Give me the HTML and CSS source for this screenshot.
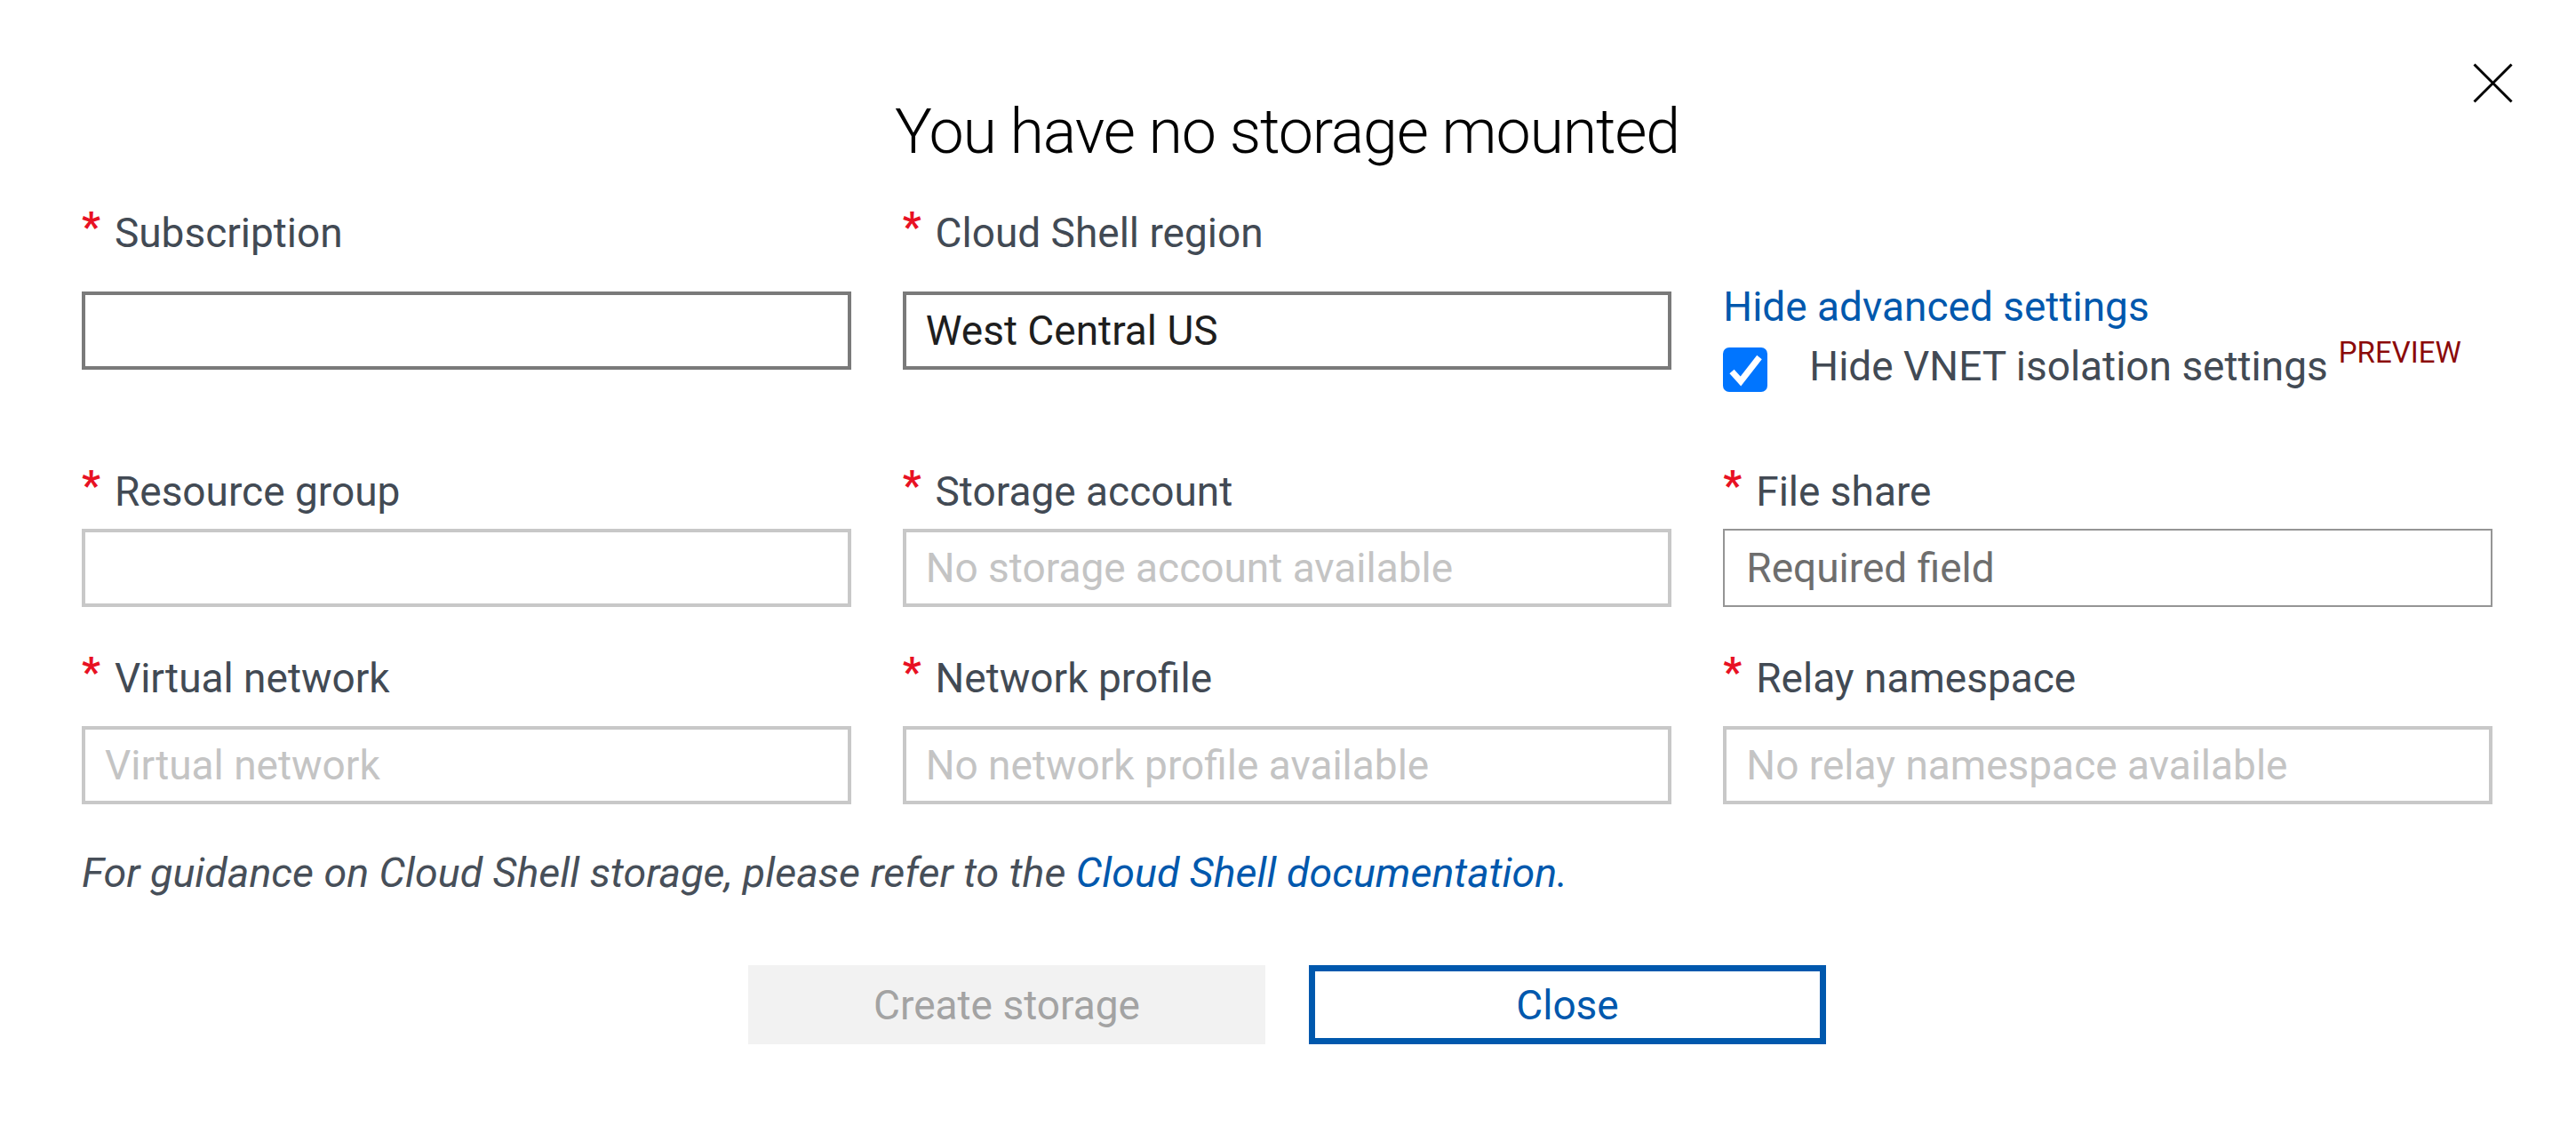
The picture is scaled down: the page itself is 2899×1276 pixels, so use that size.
FILE: index.html
```
<!DOCTYPE html>
<html lang="en">
<head>
    <meta charset="UTF-8">
    <meta name="viewport" content="width=device-width, initial-scale=1.0">
    <title>Cloud Shell storage</title>
    <link rel="stylesheet" href="styles.css">
</head>
<body>
    <div class="dialog">
        <button class="close-x" aria-label="Close">
            <svg viewBox="0 0 45 45" width="45" height="45">
                <path d="M1.5 1.5 L43.5 43.5 M43.5 1.5 L1.5 43.5" stroke="#000" stroke-width="3" fill="none"/>
            </svg>
        </button>

        <h1 class="title">You have no storage mounted</h1>

        <div class="row row-top">
            <div class="field">
                <label class="label"><span class="req">*</span>Subscription</label>
                <input class="input active" type="text" value="">
            </div>
            <div class="field">
                <label class="label"><span class="req">*</span>Cloud Shell region</label>
                <input class="input active" type="text" value="West Central US">
            </div>
            <div class="advanced">
                <a class="link" href="#">Hide advanced settings</a>
                <div class="check-row">
                    <span class="checkbox">
                        <svg viewBox="0 0 50 50" width="50" height="50">
                            <path d="M10 27 L20 38 L41 11" stroke="#fff" stroke-width="7" fill="none" stroke-linejoin="miter"/>
                        </svg>
                    </span>
                    <span class="check-label">Hide VNET isolation settings<span class="preview">PREVIEW</span></span>
                </div>
            </div>
        </div>

        <div class="row row-mid">
            <div class="field">
                <label class="label"><span class="req">*</span>Resource group</label>
                <input class="input" type="text" disabled>
            </div>
            <div class="field">
                <label class="label"><span class="req">*</span>Storage account</label>
                <input class="input" type="text" placeholder="No storage account available" disabled>
            </div>
            <div class="field">
                <label class="label"><span class="req">*</span>File share</label>
                <input class="input plain" type="text" placeholder="Required field">
            </div>
        </div>

        <div class="row row-bottom">
            <div class="field">
                <label class="label"><span class="req">*</span>Virtual network</label>
                <input class="input" type="text" placeholder="Virtual network" disabled>
            </div>
            <div class="field">
                <label class="label"><span class="req">*</span>Network profile</label>
                <input class="input" type="text" placeholder="No network profile available" disabled>
            </div>
            <div class="field">
                <label class="label"><span class="req">*</span>Relay namespace</label>
                <input class="input" type="text" placeholder="No relay namespace available" disabled>
            </div>
        </div>

        <p class="note">For guidance on Cloud Shell storage, please refer to the <a href="#">Cloud Shell documentation.</a></p>

        <div class="actions">
            <button class="btn btn-disabled" disabled>Create storage</button>
            <button class="btn btn-outline">Close</button>
        </div>
    </div>
</body>
</html>
```
FILE: styles.css
```
/* Global */
body {
    margin: 0;
    font-family: "Segoe UI", Roboto, "Noto Sans", sans-serif;
    background: #FFFFFF;
    color: #424a54;
}

a {
    text-decoration: none;
    color: #0058ad;
}

button {
    font-family: inherit;
    cursor: pointer;
}

.dialog {
    position: relative;
    padding: 106px 94px 0 92px;
}

/* Header */
.close-x {
    position: absolute;
    top: 71px;
    right: 71px;
    width: 45px;
    height: 45px;
    padding: 0;
    border: none;
    background: none;
}

.close-x svg {
    display: block;
}

.title {
    margin: 0;
    font-size: 70px;
    line-height: 84px;
    font-weight: 300;
    letter-spacing: -1.2px;
    color: #000;
    text-align: center;
}

/* Form rows */
.row {
    display: grid;
    grid-template-columns: repeat(3, 1fr);
    column-gap: 58px;
    align-items: start;
}

.row-top {
    margin-top: 42px;
}

.row-mid {
    margin-top: 81px;
}

.row-bottom {
    margin-top: 50px;
}

.field {
    display: flex;
    flex-direction: column;
}

.label {
    font-size: 46px;
    line-height: 60px;
    color: #424a54;
}

.req {
    color: #e81123;
    font-weight: 700;
    line-height: 0;
    vertical-align: 7px;
    margin-right: 16px;
}

.input {
    box-sizing: border-box;
    width: 100%;
    height: 88px;
    padding: 0 22px;
    font-family: inherit;
    font-size: 46px;
    color: #1e1e1e;
    background: #FFFFFF;
    border: 4px solid #c8c8c8;
    border-radius: 0;
    outline: none;
}

.input::placeholder {
    color: #c4c4c4;
}

.input.active {
    border-color: #7a7a7a;
}

.input.plain {
    border: 2px solid #959595;
    padding-left: 24px;
}

.input.plain::placeholder {
    color: #6e6e6e;
}

.row-top .input {
    margin-top: 36px;
}

.row-mid .input {
    margin-top: 12px;
}

.row-bottom .input {
    margin-top: 24px;
}

/* Advanced settings */
.advanced {
    padding-top: 83px;
    font-size: 46px;
    line-height: 60px;
}

.link {
    display: block;
}

.check-row {
    display: flex;
    align-items: flex-start;
    margin-top: 7px;
}

.checkbox {
    width: 50px;
    height: 50px;
    margin-top: 9px;
    margin-right: 47px;
    border-radius: 7px;
    background: #0075ff;
    flex-shrink: 0;
}

.checkbox svg {
    display: block;
}

.check-label {
    color: #424a54;
}

.preview {
    font-size: 33px;
    line-height: 0;
    vertical-align: 20px;
    margin-left: 12px;
    color: #8b0a0a;
}

/* Footer */
.note {
    margin: 47px 0 0;
    font-size: 46.6px;
    line-height: 60px;
    font-style: italic;
    color: #474f59;
}

.actions {
    display: flex;
    justify-content: center;
    gap: 49px;
    margin-top: 74px;
}

.btn {
    box-sizing: border-box;
    width: 582px;
    height: 89px;
    font-size: 46px;
    padding: 0;
}

.btn-disabled {
    background: #f2f2f2;
    color: #a3a3a3;
    border: none;
    cursor: default;
}

.btn-outline {
    background: #FFFFFF;
    color: #0058ad;
    border: 7px solid #0058ad;
}
```
